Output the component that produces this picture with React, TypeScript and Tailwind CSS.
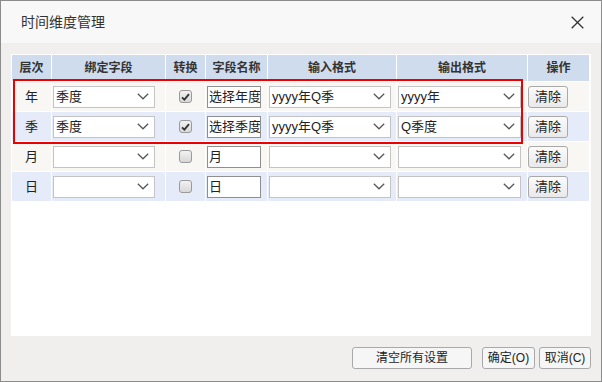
import React from "react";

const font = { fontFamily: '"Liberation Sans", "Noto Sans CJK SC", sans-serif' };

function Chevron() {
  return (
    <svg width="12" height="7" viewBox="0 0 12 7" className="shrink-0">
      <path d="M0.8 0.8 L6 5.8 L11.2 0.8" fill="none" stroke="#555" strokeWidth="1.2" />
    </svg>
  );
}

function Select({ w, value }: { w: string; value?: string }) {
  return (
    <div className={`${w} h-[22px] bg-white border border-[#c4c4c4] flex items-center justify-between pl-[2px] pr-[5px] text-[13px] text-[#222]`}>
      <span className="whitespace-nowrap overflow-hidden leading-[20px]">{value || ""}</span>
      <Chevron />
    </div>
  );
}

function Check({ on }: { on: boolean }) {
  return (
    <div className="w-[13px] h-[13px] rounded-[3px] border border-[#9a9a9a] bg-gradient-to-b from-[#f2f2f2] to-[#d8d8d8] flex items-center justify-center">
      {on && (
        <svg width="9" height="8" viewBox="0 0 9 8">
          <path d="M1 4.3 L3.4 6.6 L8 1.2" fill="none" stroke="#333" strokeWidth="1.8" />
        </svg>
      )}
    </div>
  );
}

const rows = [
  { lv: "年", field: "季度", conv: true, name: "选择年度", inF: "yyyy年Q季", outF: "yyyy年", bg: "bg-[#f8f7f3]" },
  { lv: "季", field: "季度", conv: true, name: "选择季度", inF: "yyyy年Q季", outF: "Q季度", bg: "bg-[#e6ebfa]" },
  { lv: "月", field: "", conv: false, name: "月", inF: "", outF: "", bg: "bg-[#f8f7f3]" },
  { lv: "日", field: "", conv: false, name: "日", inF: "", outF: "", bg: "bg-[#e6ebfa]" },
];

const cols = "grid grid-cols-[40px_114px_40px_62px_129px_131px_62px]";

export default function App() {
  return (
    <div style={font} className="w-[602px] h-[382px] bg-[#f0efed] border border-[#8c8c8c] flex flex-col text-[#222]">
      <div className="h-[42px] shrink-0 bg-[#f8f8f8] flex items-center justify-between pl-[20px] pr-[17px]">
        <span className="text-[14px] text-[#333]">时间维度管理</span>
        <svg width="13" height="13" viewBox="0 0 13 13">
          <path d="M0.7 0.7 L12.3 12.3 M12.3 0.7 L0.7 12.3" stroke="#333" strokeWidth="1.3" />
        </svg>
      </div>
      <div className="flex-1 flex flex-col px-[10px] pt-[11px]">
        <div className="relative h-[282px] bg-white p-px">
          <div className={`${cols} h-[26px] text-[12px] font-bold text-[#333]`}>
            {["层次", "绑定字段", "转换", "字段名称", "输入格式", "输出格式", "操作"].map((h) => (
              <div key={h} className="bg-[#cfdcee] border-r border-white flex items-center justify-center">
                {h}
              </div>
            ))}
          </div>
          {rows.map((r, i) => (
            <div key={i} className={`${cols} h-[30px] border-t border-white`}>
              <div className={`${r.bg} border-r border-white flex items-center justify-center text-[13px]`}>{r.lv}</div>
              <div className={`${r.bg} border-r border-white flex items-center pl-px`}>
                <Select w="w-[102px]" value={r.field} />
              </div>
              <div className={`${r.bg} border-r border-white flex items-center justify-center`}>
                <Check on={r.conv} />
              </div>
              <div className={`${r.bg} border-r border-white flex items-center pl-[1px]`}>
                <div className="w-[54px] h-[22px] bg-white border border-[#8f8f8f] overflow-hidden whitespace-nowrap text-[13px] leading-[20px] pl-[1px]">
                  {r.name}
                </div>
              </div>
              <div className={`${r.bg} border-r border-white flex items-center pl-px`}>
                <Select w="w-[122px]" value={r.inF} />
              </div>
              <div className={`${r.bg} border-r border-white flex items-center pl-px`}>
                <Select w="w-[123px]" value={r.outF} />
              </div>
              <div className={`${r.bg} border-r border-white flex items-center pl-[0px]`}>
                <button className="w-[40px] h-[22px] rounded-[3px] border border-[#a9a9a9] bg-gradient-to-b from-[#fbfbfb] to-[#e9e9e9] text-[13px] leading-none text-[#222]">
                  清除
                </button>
              </div>
            </div>
          ))}
          <div className="absolute left-[2px] top-[25px] w-[510px] h-[65px] border-2 border-[#ee0000]" />
        </div>
        <div className="flex justify-end items-center gap-[4px] mt-[11px] pr-0">
          <button className="w-[120px] h-[22px] rounded-[3px] border border-[#a9a9a9] bg-[#f6f6f6] text-[12px] leading-none mr-[6px]">
            清空所有设置
          </button>
          <button className="w-[53px] h-[22px] rounded-[3px] border border-[#a9a9a9] bg-[#f6f6f6] text-[12px] leading-none">
            确定(O)
          </button>
          <button className="w-[52px] h-[22px] rounded-[3px] border border-[#a9a9a9] bg-[#f6f6f6] text-[12px] leading-none">
            取消(C)
          </button>
        </div>
      </div>
    </div>
  );
}
